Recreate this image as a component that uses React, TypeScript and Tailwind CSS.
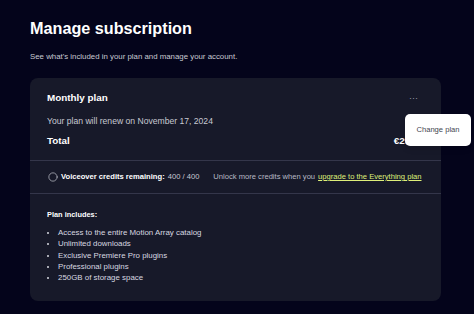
import { Circle } from "lucide-react";

const features = [
  "Access to the entire Motion Array catalog",
  "Unlimited downloads",
  "Exclusive Premiere Pro plugins",
  "Professional plugins",
  "250GB of storage space",
];

export default function App() {
  return (
    <div className="h-[314px] w-[474px] overflow-hidden bg-[#04041b] px-[30px] pt-[16px] font-['Liberation_Sans',Arial,sans-serif] text-white">
      <h1 className="text-[16.2px] font-bold leading-[24px]">Manage subscription</h1>
      <p className="mt-[12px] text-[7.85px] leading-[10px] text-[#c8c9d2]">
        See what's included in your plan and manage your account.
      </p>

      <div className="relative mt-[16px] w-[411px] rounded-[8px] bg-[#171929]">
        <div className="px-[17px] pt-[13px] pb-[12px]">
          <div className="flex items-center justify-between">
            <h2 className="text-[9.9px] font-bold leading-[14px]">Monthly plan</h2>
            <span className="mr-[6px] text-[9px] leading-[10px] text-[#9a9cab]">···</span>
          </div>
          <p className="mt-[10px] text-[8.6px] leading-[12px] text-[#c8c9d2]">Your plan will renew on November 17, 2024</p>
          <div className="mt-[7px] flex items-center justify-between">
            <span className="text-[9.9px] font-bold leading-[14px]">Total</span>
            <span className="text-[9.9px] font-bold leading-[14px]">€29.99</span>
          </div>
        </div>

        <div className="flex items-center whitespace-nowrap border-y border-[#34364a] px-[17px] py-[10px] text-[7.6px] leading-[12px]">
          <Circle size={10} strokeWidth={1.5} className="ml-[1px] mr-[3px] shrink-0 text-[#d7d8e0]" />
          <span className="font-bold">Voiceover credits remaining:</span>
          <span className="ml-[3px] text-[#c8c9d2]">400 / 400</span>
          <span className="ml-[14px] text-[#b8bac6]">Unlock more credits when you</span>
          <a className="ml-[3px] text-[#dff07a] underline">upgrade to the Everything plan</a>
        </div>

        <div className="px-[17px] pt-[15px] pb-[18px]">
          <h3 className="text-[7.4px] font-bold leading-[12px]">Plan includes:</h3>
          <ul className="mt-[6px] list-disc pl-[11px] text-[7.9px] leading-[11.3px] text-[#d7d8e0] marker:text-[#d7d8e0]">
            {features.map((f) => (
              <li key={f}>{f}</li>
            ))}
          </ul>
        </div>

        <div className="absolute left-[375px] top-[36px] flex h-[32px] w-[66px] items-center justify-center rounded-[5px] bg-white text-[7.6px] text-[#44454f] shadow-md">
          Change plan
        </div>
      </div>
    </div>
  );
}
